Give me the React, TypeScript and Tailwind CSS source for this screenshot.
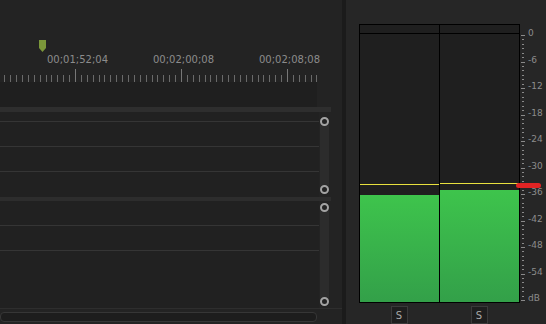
import React from 'react';

const FONT = { fontFamily: '"DejaVu Sans", Verdana, sans-serif' };

// ruler ticks: major every 106px, 18 subdivisions
const STEP = 106 / 18;

function Ruler() {
  const ticks: { x: number; major: boolean }[] = [];
  for (let k = -12; 75 + k * STEP <= 317; k++) {
    ticks.push({ x: 75 + k * STEP, major: k % 18 === 0 });
  }
  return (
    <div className="relative h-[82px] shrink-0">
      {/* playhead marker */}
      <svg className="absolute left-[39px] top-[40px]" width="7" height="12" viewBox="0 0 7 12">
        <path d="M0 0 H7 V8 L3.5 12 L0 8 Z" fill="#7b973a" />
      </svg>
      <div className="absolute left-0 top-[54px] w-[317px] h-[12px] text-[10px] leading-[12px] text-[#8c8c8c]" style={FONT}>
        <span className="absolute left-[47px]">00;01;52;04</span>
        <span className="absolute left-[153px]">00;02;00;08</span>
        <span className="absolute left-[259px]">00;02;08;08</span>
      </div>
      <svg className="absolute left-0 top-[68px]" width="317" height="14">
        {ticks.map((t, i) => (
          <rect
            key={i}
            x={Math.round(t.x)}
            y={t.major ? 1 : 7}
            width="1"
            height={t.major ? 13 : 7}
            fill={t.major ? '#777' : '#6a6a6a'}
          />
        ))}
      </svg>
    </div>
  );
}

function Ring() {
  return <div className="w-[9px] h-[9px] rounded-full border-2 border-[#a3a3a3] bg-[#232323]" />;
}

function VScroll({ h }: { h: string }) {
  return (
    <div className={`w-[9px] ${h} rounded-full bg-[#2c2c2c] flex flex-col items-center justify-between`}>
      <Ring />
      <Ring />
    </div>
  );
}

function Timeline() {
  return (
    <div className="w-[342px] shrink-0 bg-[#232323] flex flex-col">
      <Ruler />
      <div className="h-[25px] shrink-0">
        <div className="w-[317px] h-full bg-[#1f1f1f]" />
      </div>
      <div className="h-[5px] w-[331px] shrink-0 bg-[#2e2e2e]" />

      {/* track group 1 */}
      <div className="h-[85px] shrink-0 flex">
        <div className="w-[319px] flex flex-col bg-[#212121]">
          <div className="h-[9px]" />
          <div className="h-[25px] border-t border-[#353535]" />
          <div className="h-[25px] border-t border-[#353535]" />
          <div className="flex-1 border-t border-[#353535]" />
        </div>
        <div className="pt-[5px] pl-[1px]">
          <VScroll h="h-[77px]" />
        </div>
      </div>

      <div className="h-[4px] w-[331px] shrink-0 bg-[#2d2d2d]" />

      {/* track group 2 */}
      <div className="h-[107px] shrink-0 flex">
        <div className="w-[319px] flex flex-col bg-[#212121]">
          <div className="h-[24px]" />
          <div className="h-[25px] border-t border-[#353535]" />
          <div className="flex-1 border-t border-[#353535]" />
        </div>
        <div className="pt-[2px] pl-[1px]">
          <VScroll h="h-[103px]" />
        </div>
      </div>

      <div className="h-[4px] shrink-0 border-t border-[#2e2e2e]" />
      <div className="w-[317px] h-[10px] shrink-0 rounded-[4px] border border-[#363636] bg-[#1d1d1d]" />
    </div>
  );
}

const DB_LABELS = ['0', '-6', '-12', '-18', '-24', '-30', '-36', '-42', '-48', '-54', 'dB'];

function Scale() {
  const ticks: { y: number; major: boolean }[] = [];
  for (let i = 0; i <= 60; i++) {
    ticks.push({ y: 11 + i * (26.5 / 6), major: i % 6 === 0 });
  }
  return (
    <div className="relative w-[27px] h-[279px]">
      <svg className="absolute left-[1px] top-0" width="5" height="279">
        {ticks.map((t, i) => (
          <rect key={i} x={t.major ? 0 : 1} y={Math.round(t.y)} width={t.major ? 4 : 2} height="1" fill="#8a8a8a" />
        ))}
      </svg>
      <div className="flex flex-col pt-[4px] pl-[8px] text-[9px] leading-[11px] text-[#8c8c8c]" style={FONT}>
        {DB_LABELS.map((l) => (
          <div key={l} className="h-[26.5px] shrink-0">{l}</div>
        ))}
      </div>
    </div>
  );
}

function Channel({ peak, level }: { peak: string; level: string }) {
  return (
    <div className="relative w-[79px] h-full flex flex-col justify-end">
      <div className={`absolute left-0 right-0 ${peak} h-px bg-[#e8e03e]`} />
      <div className={`${level} bg-gradient-to-b from-[#3ec44c] to-[#33a049]`} />
    </div>
  );
}

function Meter() {
  return (
    <div className="flex-1 bg-[#262626] flex flex-col pt-[24px] pl-[13px]">
      <div className="relative flex">
        <div className="w-[161px] h-[279px] border border-black bg-[#1f1f1f] flex flex-col">
          <div className="h-[9px] shrink-0 border-b border-black flex">
            <div className="w-[79px]" />
            <div className="flex-1 border-l border-black" />
          </div>
          <div className="flex-1 flex">
            <Channel peak="top-[150px]" level="h-[107px]" />
            <div className="w-px bg-black" />
            <Channel peak="top-[149px]" level="h-[112px]" />
          </div>
        </div>
        <Scale />
        <div className="absolute left-[157px] top-[159px] w-[25px] h-[5px] rounded-[3px] bg-[#e02424]" />
      </div>
      <div className="mt-[3px] w-[161px] flex">
        {[0, 1].map((i) => (
          <div key={i} className="w-[80px] flex justify-center">
            <div
              className="w-[17px] h-[18px] border border-[#3a3a3a] bg-[#1e1e1e] flex items-center justify-center text-[10px] text-[#a8a8a8]"
              style={FONT}
            >
              S
            </div>
          </div>
        ))}
      </div>
    </div>
  );
}

export default function App() {
  return (
    <div className="w-[546px] h-[324px] overflow-hidden flex bg-[#232323]">
      <Timeline />
      <div className="w-[4px] shrink-0 bg-[#1b1b1b]" />
      <Meter />
    </div>
  );
}
